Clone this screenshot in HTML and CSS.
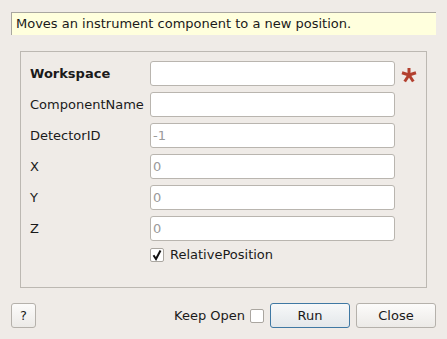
FILE: index.html
```html
<!DOCTYPE html>
<html lang="en">
<head>
    <meta charset="UTF-8">
    <title>MoveInstrumentComponent</title>
    <link rel="stylesheet" href="styles.css">
</head>
<body>
    <div class="dialog">
        <div class="description">Moves an instrument component to a new position.</div>

        <div class="group">
            <div class="row">
                <label class="bold">Workspace</label>
                <div class="field"></div>
                <svg class="star" width="16" height="16" viewBox="0 0 16 16">
                    <g stroke="#b3402f" stroke-width="3" stroke-linecap="butt">
                        <line x1="8" y1="8" x2="8" y2="1"/>
                        <line x1="8" y1="8" x2="15" y2="5.8"/>
                        <line x1="8" y1="8" x2="12.3" y2="14.5"/>
                        <line x1="8" y1="8" x2="3.7" y2="14.5"/>
                        <line x1="8" y1="8" x2="1" y2="5.8"/>
                    </g>
                </svg>
            </div>
            <div class="row">
                <label>ComponentName</label>
                <div class="field"></div>
            </div>
            <div class="row">
                <label>DetectorID</label>
                <div class="field hint">-1</div>
            </div>
            <div class="row">
                <label>X</label>
                <div class="field hint">0</div>
            </div>
            <div class="row">
                <label>Y</label>
                <div class="field hint">0</div>
            </div>
            <div class="row">
                <label>Z</label>
                <div class="field hint">0</div>
            </div>
            <div class="check-row">
                <span class="box">
                    <svg width="12" height="12" viewBox="0 0 12 12">
                        <path d="M2.5 6.2 L5 10 L9.5 1.5" fill="none" stroke="#111" stroke-width="2"/>
                    </svg>
                </span>
                <span>RelativePosition</span>
            </div>
        </div>

        <div class="buttons">
            <button class="help">?</button>
            <div class="spacer"></div>
            <span class="keep">Keep Open</span>
            <span class="box small"></span>
            <button class="default">Run</button>
            <button>Close</button>
        </div>
    </div>
</body>
</html>
```

FILE: styles.css
```css
body, html {
    margin: 0;
    padding: 0;
    background: #efebe7;
    font-family: "DejaVu Sans", sans-serif;
    font-size: 13px;
    color: #1a1a1a;
}

.dialog {
    width: 447px;
    height: 339px;
    padding-top: 12px;
    box-sizing: border-box;
}

.description {
    margin: 0 11px;
    height: 23px;
    line-height: 22px;
    background: #ffffdd;
    border-top: 1px solid #a9a7a0;
    border-left: 1px solid #a9a7a0;
    padding-left: 4px;
    box-sizing: border-box;
}

.group {
    margin: 16px 0 0 20px;
    width: 407px;
    height: 237px;
    border: 1px solid #bcb8b2;
    box-sizing: border-box;
    padding: 9px 0 0 9px;
}

.row {
    display: flex;
    align-items: center;
    height: 25px;
    margin-bottom: 6px;
}

.row label {
    width: 120px;
}

.bold {
    font-weight: bold;
}

.field {
    width: 245px;
    height: 25px;
    box-sizing: border-box;
    background: #ffffff;
    border: 1px solid #b9b5af;
    border-radius: 3px;
    padding-left: 2px;
    line-height: 23px;
}

.hint {
    color: #9a9a9a;
}

.star {
    margin-left: 6px;
    margin-top: 2px;
}

.check-row {
    display: flex;
    align-items: center;
    margin: 4px 0 0 120px;
}

.box {
    display: inline-flex;
    align-items: center;
    justify-content: center;
    width: 14px;
    height: 14px;
    box-sizing: border-box;
    background: #ffffff;
    border: 1px solid #aaa6a0;
    border-radius: 2px;
    margin-right: 6px;
}

.box.small {
    margin-right: 6px;
}

.buttons {
    display: flex;
    align-items: center;
    margin: 15px 11px 0 11px;
}

.spacer {
    flex: 1;
}

.keep {
    margin-right: 5px;
}

button {
    width: 80px;
    height: 25px;
    font-family: "DejaVu Sans", sans-serif;
    font-size: 13px;
    color: #1a1a1a;
    background: linear-gradient(#fcfbfa, #eceae7);
    border: 1px solid #b5b1ab;
    border-radius: 3px;
    margin-left: 6px;
    padding: 0;
}

button.help {
    width: 25px;
    margin-left: 0;
}

button.default {
    border-color: #3f78a3;
    background: linear-gradient(#f7f8f9, #e3e7ea);
    margin-left: 0;
}
```
